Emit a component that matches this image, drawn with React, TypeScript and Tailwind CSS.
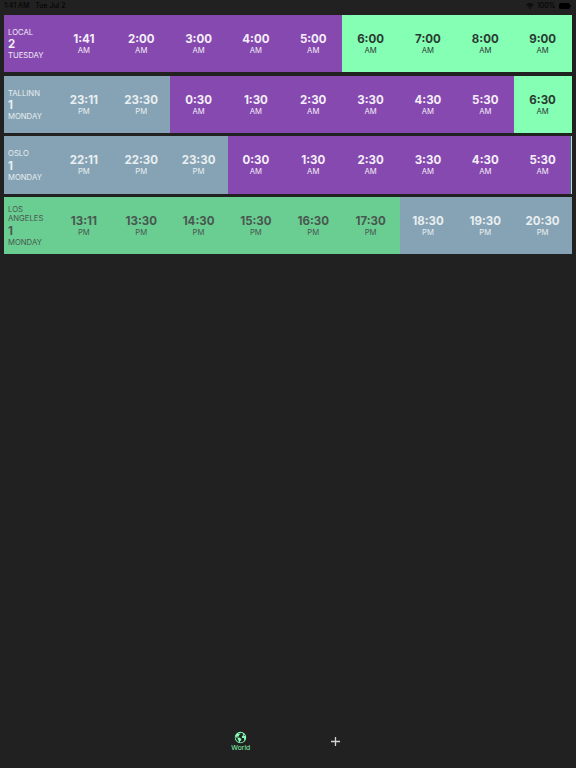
import { IoEarth } from 'react-icons/io5';

type Segment = { width: string; color: string };
type Row = {
  place: string;
  day: string;
  weekday: string;
  times: string[];
  box: string;
  segments: Segment[];
  labelColor: string;
  tone: (i: number) => string;
};

const light = 'text-[#f4eef8]';
const soft = 'text-[#e9eef1]';
const dark = 'text-[#2b3a32]';
const muted = 'text-[#48584f]';

const rows: Row[] = [
  {
    place: 'LOCAL', day: '2', weekday: 'TUESDAY', box: 'h-[57px] mb-[4px]',
    times: ['1:41 AM', '2:00 AM', '3:00 AM', '4:00 AM', '5:00 AM', '6:00 AM', '7:00 AM', '8:00 AM', '9:00 AM'],
    segments: [{ width: 'w-[338px]', color: 'bg-[#8649af]' }, { width: 'flex-1', color: 'bg-[#84ffb4]' }],
    labelColor: light,
    tone: (i) => (i < 5 ? light : dark),
  },
  {
    place: 'TALLINN', day: '1', weekday: 'MONDAY', box: 'h-[57px] mb-[3px]',
    times: ['23:11 PM', '23:30 PM', '0:30 AM', '1:30 AM', '2:30 AM', '3:30 AM', '4:30 AM', '5:30 AM', '6:30 AM'],
    segments: [{ width: 'w-[166px]', color: 'bg-[#85a3b4]' }, { width: 'w-[344px]', color: 'bg-[#8649af]' }, { width: 'flex-1', color: 'bg-[#84ffb4]' }],
    labelColor: soft,
    tone: (i) => (i < 2 ? soft : i < 8 ? light : dark),
  },
  {
    place: 'OSLO', day: '1', weekday: 'MONDAY', box: 'h-[58px] mb-[3px]',
    times: ['22:11 PM', '22:30 PM', '23:30 PM', '0:30 AM', '1:30 AM', '2:30 AM', '3:30 AM', '4:30 AM', '5:30 AM'],
    segments: [{ width: 'w-[223.5px]', color: 'bg-[#85a3b4]' }, { width: 'w-[343.5px]', color: 'bg-[#8649af]' }, { width: 'flex-1', color: 'bg-[#84ffb4]' }],
    labelColor: soft,
    tone: (i) => (i < 3 ? soft : light),
  },
  {
    place: 'LOS ANGELES', day: '1', weekday: 'MONDAY', box: 'h-[57px]',
    times: ['13:11 PM', '13:30 PM', '14:30 PM', '15:30 PM', '16:30 PM', '17:30 PM', '18:30 PM', '19:30 PM', '20:30 PM'],
    segments: [{ width: 'w-[395.5px]', color: 'bg-[#6acd92]' }, { width: 'flex-1', color: 'bg-[#85a3b4]' }],
    labelColor: muted,
    tone: (i) => (i < 6 ? muted : soft),
  },
];

function StatusBar() {
  return (
    <div className="flex h-[15px] items-start pl-[4px] pr-[5px] pt-[2px] text-[7px] leading-[8px] text-black">
      <span>1:41 AM</span>
      <span className="ml-[6px]">Tue Jul 2</span>
      <svg className="ml-auto mt-[1px] h-[6px] w-[8px]" viewBox="0 0 16 12" fill="currentColor">
        <path d="M8 12 5.6 9.4a3.5 3.5 0 0 1 4.8 0Z" />
        <path d="M3.4 7.1a6.6 6.6 0 0 1 9.2 0M.9 4.4a10.2 10.2 0 0 1 14.2 0" fill="none" stroke="currentColor" strokeWidth="2" />
      </svg>
      <span className="ml-[3px]">100%</span>
      <span className="ml-[3px] mt-[1px] h-[6px] w-[11px] rounded-[1.5px] bg-black" />
      <span className="ml-[0.5px] mt-[3px] h-[2px] w-[1px] rounded-r bg-black" />
    </div>
  );
}

function ZoneRow({ row }: { row: Row }) {
  return (
    <div className={`relative ml-[4px] w-[568px] ${row.box}`}>
      <div className="absolute inset-0 flex">
        {row.segments.map((s, i) => (
          <div key={i} className={`${s.width} ${s.color}`} />
        ))}
      </div>
      <div className="relative flex h-full items-center">
        <div className={`w-[51.2px] shrink-0 pl-[4px] pt-[1px] text-[7.7px] leading-[9.4px] ${row.labelColor}`}>
          <div>{row.place}</div>
          <div className="text-[11.4px] font-bold leading-[14px]">{row.day}</div>
          <div>{row.weekday}</div>
        </div>
        {row.times.map((t, i) => {
          const [clock, half] = t.split(' ');
          return (
            <div key={i} className={`w-[57.35px] shrink-0 text-center ${row.tone(i)}`}>
              <div className="text-[11.5px] font-bold leading-[14px]">{clock}</div>
              <div className="text-[7.7px] leading-[9.2px]">{half}</div>
            </div>
          );
        })}
      </div>
    </div>
  );
}

export default function App() {
  return (
    <div className="flex h-[768px] w-[576px] flex-col overflow-hidden bg-[#212121] font-[Inter,sans-serif]">
      <StatusBar />
      <main className="flex-1">
        {rows.map((row) => (
          <ZoneRow key={row.place} row={row} />
        ))}
      </main>
      <nav className="flex h-[37px] shrink-0 justify-center">
        <div className="flex w-[94.5px] flex-col items-center text-[#84ffb4]">
          <IoEarth className="h-[13px] w-[13px]" />
          <span className="text-[6.8px] leading-[8px]">World</span>
        </div>
        <div className="flex w-[94.5px] justify-center pt-[6px]">
          <svg className="h-[9px] w-[9px]" viewBox="0 0 9 9" stroke="#d4d4d4" strokeWidth="1.3">
            <path d="M4.5 0V9M0 4.5H9" />
          </svg>
        </div>
      </nav>
    </div>
  );
}
